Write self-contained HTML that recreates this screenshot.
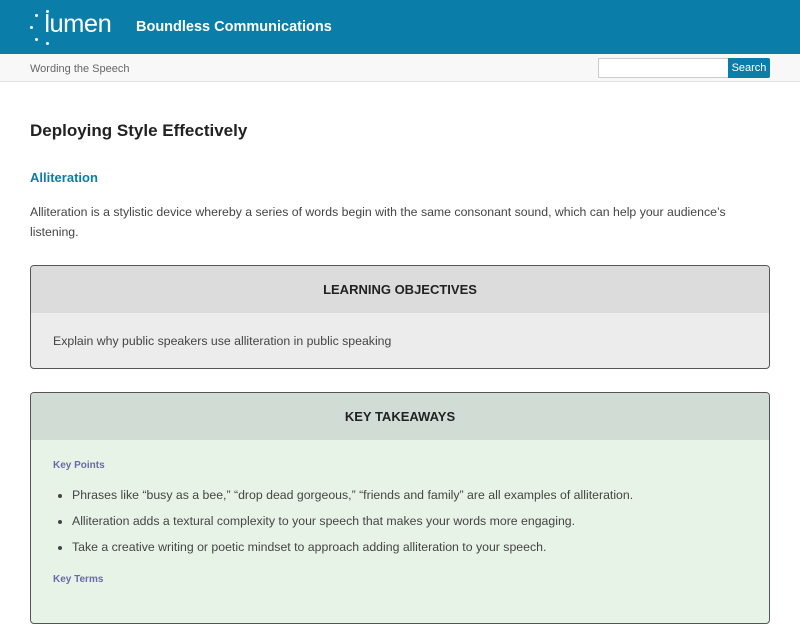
<!DOCTYPE html>
<html><head><meta charset="utf-8"><style>
body{margin:0;width:800px;height:600px;overflow:hidden;background:#fff;font-family:"Liberation Sans",sans-serif;color:#333}
.hdr{height:54px;background:#0a7ea8;position:relative}
.hdr .t{position:absolute;left:136px;top:19px;color:#fff;font-weight:bold;font-size:14.5px}
.logo{position:absolute;left:45px;top:10px;color:#fff;font-size:25px;letter-spacing:-0.5px;transform:scaleX(1.02)}
.dot{position:absolute;width:3px;height:3px;border-radius:50%;background:#fff}
.sub{height:27px;background:#f8f8f8;border-bottom:1px solid #e2e2e2;position:relative}
.sub span{position:absolute;left:30px;top:9px;font-size:11px;color:#666}
.inp{position:absolute;left:598px;top:4px;background:#fff;border:1px solid #ccc;box-sizing:border-box;width:131px;height:20px}
.btn{position:absolute;left:728px;top:4px;width:42px;height:20px;background:#0a7ea8;color:#fff;font-size:11px;text-align:center;line-height:20px;border-radius:0 2px 2px 0}
h1{position:absolute;left:30px;top:121px;margin:0;font-size:17px;color:#222}
h2{position:absolute;left:30px;top:170px;margin:0;font-size:13px;color:#0a7ea8}
.p{position:absolute;left:30px;top:202px;width:740px;font-size:12.3px;line-height:20px;color:#444}
.box{position:absolute;left:30px;width:738px;border:1px solid #555;border-radius:4px;overflow:hidden}
.bh{height:47px;line-height:48px;text-align:center;font-weight:bold;font-size:13px;color:#222}
</style></head><body>
<div class="hdr">
<div class="dot" style="left:35px;top:14px"></div><div class="dot" style="left:46px;top:10px"></div>
<div class="dot" style="left:30px;top:26px"></div><div class="dot" style="left:35px;top:38px"></div><div class="dot" style="left:46px;top:42px"></div>
<div class="logo">lumen</div>
<div class="t">Boundless Communications</div></div>
<div class="sub"><span>Wording the Speech</span><div class="inp"></div><div class="btn">Search</div></div>
<h1>Deploying Style Effectively</h1>
<h2>Alliteration</h2>
<div class="p">Alliteration is a stylistic device whereby a series of words begin with the same consonant sound, which can help your audience’s listening.</div>
<div class="box" style="top:265px;height:102px;background:#ececec"><div class="bh" style="background:#dcdcdc">LEARNING OBJECTIVES</div>
<div style="padding:21px 22px;font-size:12.3px;color:#444">Explain why public speakers use alliteration in public speaking</div></div>
<div class="box" style="top:392px;height:230px;background:#e8f3e7"><div class="bh" style="background:#d1ddd4">KEY TAKEAWAYS</div>
<div style="position:absolute;left:22px;top:67px;font-size:10px;font-weight:bold;color:#6a6aa8">Key Points</div>
<ul style="position:absolute;left:22px;top:89px;margin:0;padding-left:19px;font-size:12.3px;color:#444;line-height:26px">
<li>Phrases like “busy as a bee,” “drop dead gorgeous,” “friends and family” are all examples of alliteration.</li>
<li>Alliteration adds a textural complexity to your speech that makes your words more engaging.</li>
<li>Take a creative writing or poetic mindset to approach adding alliteration to your speech.</li></ul>
<div style="position:absolute;left:22px;top:181px;font-size:10px;font-weight:bold;color:#6a6aa8">Key Terms</div>
</div>
</body></html>
